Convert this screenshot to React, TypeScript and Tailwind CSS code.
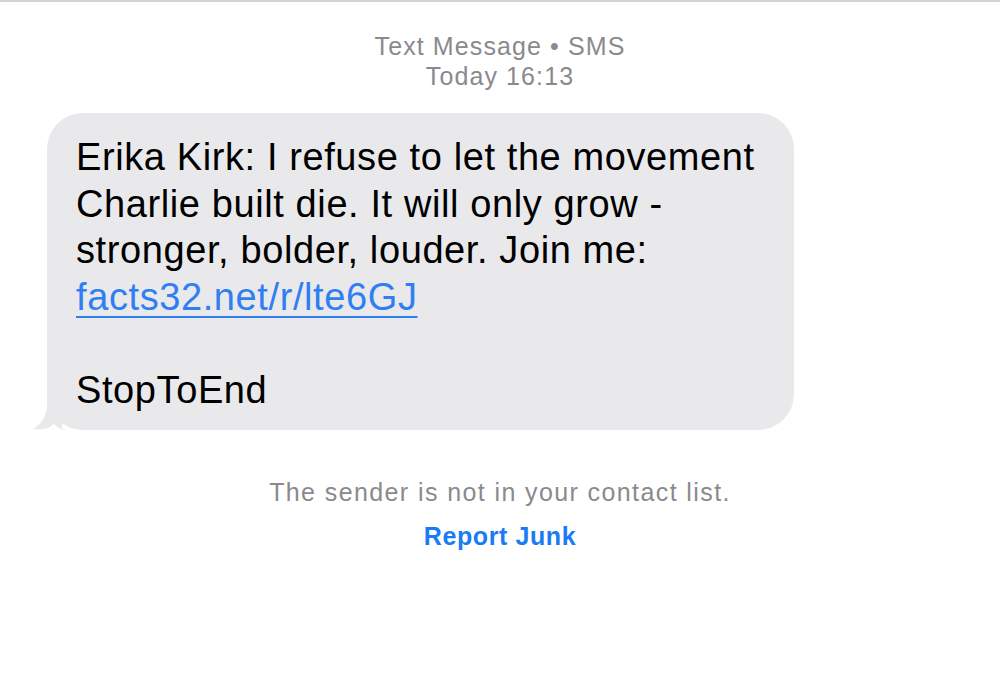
import React from "react";

export default function App() {
  return (
    <div
      className="w-[1000px] h-[695px] bg-white overflow-hidden border-t-2 border-[#d4d4d4] flex flex-col"
      style={{ fontFamily: '"Liberation Sans", Arial, sans-serif' }}
    >
      <div className="pt-[29px] flex flex-col items-center text-[25px] leading-[30px] text-[#8a8a8e] tracking-[1.1px]">
        <div>Text Message • SMS</div>
        <div>Today 16:13</div>
      </div>

      <div className="mt-[22px] ml-[47px] relative w-[747px]">
        <div className="bg-[#e9e9eb] rounded-[36px] pl-[29px] pr-[20px] pt-[21px] pb-[17px] text-[38px] leading-[46.5px] tracking-[0.6px] text-black">
          <div>Erika Kirk: I refuse to let the movement</div>
          <div>Charlie built die. It will only grow -</div>
          <div>stronger, bolder, louder. Join me:</div>
          <div>
            <span className="text-[#2f7ff3] underline decoration-[2px] underline-offset-[6px]">
              facts32.net/r/lte6GJ
            </span>
          </div>
          <div>&nbsp;</div>
          <div>StopToEnd</div>
        </div>
        <svg
          className="absolute left-[-15px] bottom-0"
          width="50"
          height="40"
          viewBox="0 0 50 40"
        >
          <path
            d="M15 0 L30 0 L30 40 L40 40 C30 40 26 38 22 34 C16 39 10 40 1 39 C8 35 15 28 15 14 Z"
            fill="#e9e9eb"
          />
        </svg>
      </div>

      <div className="mt-[47px] flex flex-col items-center text-[25px] leading-[30px]">
        <div className="text-[#8a8a8e] tracking-[1.4px]">The sender is not in your contact list.</div>
        <div className="mt-[14px] text-[#1a7cf4] font-bold tracking-[0.6px]">Report Junk</div>
      </div>
    </div>
  );
}
